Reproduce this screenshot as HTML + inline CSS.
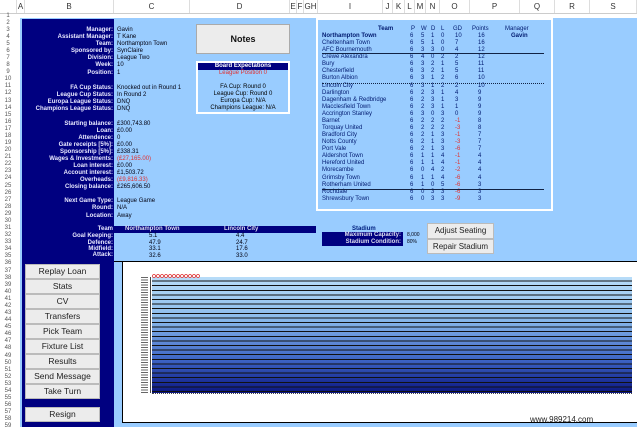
<!DOCTYPE html><html><head><meta charset="utf-8"><style>
*{margin:0;padding:0;box-sizing:border-box}
body{width:637px;height:427px;overflow:hidden;background:#fff;font-family:"Liberation Sans",sans-serif;position:relative}
.a{position:absolute;white-space:nowrap}
.hd{position:absolute;top:0;height:13px;font-size:8px;color:#333;text-align:center;line-height:13px;border-right:1px solid #ddd;background:#fff}
.rn{position:absolute;left:0;width:16px;font-size:6px;color:#555;text-align:center;line-height:7px;height:7px}
.l{position:absolute;right:524px;font-size:6px;font-weight:bold;color:#e8e8ff;line-height:7px}
.v{position:absolute;left:117px;font-size:6px;color:#001;line-height:7px}
.btn{position:absolute;left:25px;width:75px;height:15px;background:#ececec;border:1px solid #bbb;font-size:8.5px;color:#222;text-align:center;line-height:13px}
.t{position:absolute;font-size:6px;line-height:7px;color:#001a70}
.r{color:#e03030}
</style></head><body>
<div class="hd" style="left:0;width:17px"></div>
<div class="hd" style="left:17px;width:8px">A</div>
<div class="hd" style="left:25px;width:89px">B</div>
<div class="hd" style="left:114px;width:76px">C</div>
<div class="hd" style="left:190px;width:100px">D</div>
<div class="hd" style="left:290px;width:7px">E</div>
<div class="hd" style="left:297px;width:7px">F</div>
<div class="hd" style="left:304px;width:14px">GH</div>
<div class="hd" style="left:318px;width:65px">I</div>
<div class="hd" style="left:383px;width:10px">J</div>
<div class="hd" style="left:393px;width:12px">K</div>
<div class="hd" style="left:405px;width:10px">L</div>
<div class="hd" style="left:415px;width:11px">M</div>
<div class="hd" style="left:426px;width:14px">N</div>
<div class="hd" style="left:440px;width:30px">O</div>
<div class="hd" style="left:470px;width:50px">P</div>
<div class="hd" style="left:520px;width:35px">Q</div>
<div class="hd" style="left:555px;width:35px">R</div>
<div class="hd" style="left:590px;width:47px">S</div>
<div class="a" style="left:0;top:13px;width:637px;height:1px;background:#ccc"></div>
<div class="a" style="left:20px;top:18px;width:617px;height:409px;background:#99ccff"></div>
<div class="a" style="left:22px;top:19px;width:92px;height:408px;background:#000080"></div>
<div class="rn" style="top:13px">1</div><div class="rn" style="top:20px">2</div><div class="rn" style="top:27px">3</div><div class="rn" style="top:34px">4</div><div class="rn" style="top:41px">5</div><div class="rn" style="top:48px">6</div><div class="rn" style="top:55px">7</div><div class="rn" style="top:62px">8</div><div class="rn" style="top:69px">9</div><div class="rn" style="top:76px">10</div><div class="rn" style="top:83px">11</div><div class="rn" style="top:90px">12</div><div class="rn" style="top:98px">13</div><div class="rn" style="top:105px">14</div><div class="rn" style="top:112px">15</div><div class="rn" style="top:119px">16</div><div class="rn" style="top:126px">17</div><div class="rn" style="top:133px">18</div><div class="rn" style="top:140px">19</div><div class="rn" style="top:147px">20</div><div class="rn" style="top:154px">21</div><div class="rn" style="top:161px">22</div><div class="rn" style="top:168px">23</div><div class="rn" style="top:175px">24</div><div class="rn" style="top:183px">25</div><div class="rn" style="top:190px">26</div><div class="rn" style="top:197px">27</div><div class="rn" style="top:204px">28</div><div class="rn" style="top:211px">29</div><div class="rn" style="top:218px">30</div><div class="rn" style="top:225px">31</div><div class="rn" style="top:232px">32</div><div class="rn" style="top:239px">33</div><div class="rn" style="top:246px">34</div><div class="rn" style="top:253px">35</div><div class="rn" style="top:260px">36</div><div class="rn" style="top:268px">37</div><div class="rn" style="top:275px">38</div><div class="rn" style="top:282px">39</div><div class="rn" style="top:289px">40</div><div class="rn" style="top:296px">41</div><div class="rn" style="top:303px">42</div><div class="rn" style="top:310px">43</div><div class="rn" style="top:317px">44</div><div class="rn" style="top:324px">45</div><div class="rn" style="top:331px">46</div><div class="rn" style="top:338px">47</div><div class="rn" style="top:345px">48</div><div class="rn" style="top:353px">49</div><div class="rn" style="top:360px">50</div><div class="rn" style="top:367px">51</div><div class="rn" style="top:374px">52</div><div class="rn" style="top:381px">53</div><div class="rn" style="top:388px">54</div><div class="rn" style="top:395px">55</div><div class="rn" style="top:402px">56</div><div class="rn" style="top:409px">57</div><div class="rn" style="top:416px">58</div><div class="rn" style="top:423px">59</div>
<div class="l" style="top:27px">Manager:</div><div class="v" style="top:27px">Gavin</div>
<div class="l" style="top:34px">Assistant Manager:</div><div class="v" style="top:34px">T Kane</div>
<div class="l" style="top:41px">Team:</div><div class="v" style="top:41px">Northampton Town</div>
<div class="l" style="top:48px">Sponsored by:</div><div class="v" style="top:48px">SynClaire</div>
<div class="l" style="top:55px">Division:</div><div class="v" style="top:55px">League Two</div>
<div class="l" style="top:62px">Week:</div><div class="v" style="top:62px">10</div>
<div class="l" style="top:70px">Position:</div><div class="v" style="top:70px">1</div>
<div class="l" style="top:85px">FA Cup Status:</div><div class="v" style="top:85px">Knocked out in Round 1</div>
<div class="l" style="top:92px">League Cup Status:</div><div class="v" style="top:92px">In Round 2</div>
<div class="l" style="top:99px">Europa League Status:</div><div class="v" style="top:99px">DNQ</div>
<div class="l" style="top:106px">Champions League Status:</div><div class="v" style="top:106px">DNQ</div>
<div class="l" style="top:121px">Starting balance:</div><div class="v" style="top:121px">£300,743.80</div>
<div class="l" style="top:128px">Loan:</div><div class="v" style="top:128px">£0.00</div>
<div class="l" style="top:135px">Attendence:</div><div class="v" style="top:135px">0</div>
<div class="l" style="top:142px">Gate receipts [5%]:</div><div class="v" style="top:142px">£0.00</div>
<div class="l" style="top:149px">Sponsorship [5%]:</div><div class="v" style="top:149px">£338.31</div>
<div class="l" style="top:156px">Wages &amp; Investments:</div><div class="v r" style="top:156px">(£27,165.00)</div>
<div class="l" style="top:163px">Loan interest:</div><div class="v" style="top:163px">£0.00</div>
<div class="l" style="top:170px">Account interest:</div><div class="v" style="top:170px">£1,503.72</div>
<div class="l" style="top:177px">Overheads:</div><div class="v r" style="top:177px">(£9,816.33)</div>
<div class="l" style="top:184px">Closing balance:</div><div class="v" style="top:184px">£265,606.50</div>
<div class="l" style="top:198px">Next Game Type:</div><div class="v" style="top:198px">League Game</div>
<div class="l" style="top:205px">Round:</div><div class="v" style="top:205px">N/A</div>
<div class="l" style="top:213px">Location:</div><div class="v" style="top:213px">Away</div>
<div class="a" style="left:196px;top:24px;width:94px;height:30px;background:#ececec;border:1px solid #aaa;font-size:9px;font-weight:bold;text-align:center;line-height:28px;color:#111">Notes</div>
<div class="a" style="left:196px;top:61px;width:94px;height:53px;border:2px solid #fff;background:#99ccff;font-size:6px;text-align:center;line-height:7px;color:#000">
<div style="background:#000080;color:#fff;font-weight:bold">Board Expectations</div>
<div style="color:#e03030">League Position 0</div><div>&nbsp;</div>
<div>FA Cup: Round 0</div><div>League Cup: Round 0</div><div>Europa Cup: N/A</div><div>Champions League: N/A</div></div>
<div class="a" style="left:316px;top:18px;width:237px;height:193px;border:2px solid #fff;background:#99ccff"></div>
<div class="t" style="left:378px;top:26px;font-weight:bold">Team</div>
<div class="t" style="left:411px;top:26px">P</div><div class="t" style="left:421px;top:26px">W</div><div class="t" style="left:431px;top:26px">D</div><div class="t" style="left:441px;top:26px">L</div><div class="t" style="left:453px;top:26px">GD</div><div class="t" style="left:472px;top:26px">Points</div><div class="t" style="left:505px;top:26px">Manager</div>
<div class="a" style="left:322px;top:33px;font-size:6px;line-height:7.08px;color:#001a70;font-weight:bold">Northampton Town<br><span style="font-weight:normal">Cheltenham Town<br>AFC Bournemouth<br>Crewe Alexandra<br>Bury<br>Chesterfield<br>Burton Albion<br>Lincoln City<br>Darlington<br>Dagenham &amp; Redbridge<br>Macclesfield Town<br>Accrington Stanley<br>Barnet<br>Torquay United<br>Bradford City<br>Notts County<br>Port Vale<br>Aldershot Town<br>Hereford United<br>Morecambe<br>Grimsby Town<br>Rotherham United<br>Rochdale<br>Shrewsbury Town</span></div>
<div class="t" style="left:410px;top:33px;line-height:7.08px">6<br>6<br>6<br>6<br>6<br>6<br>6<br>6<br>6<br>6<br>6<br>6<br>6<br>6<br>6<br>6<br>6<br>6<br>6<br>6<br>6<br>6<br>6<br>6</div>
<div class="t" style="left:421px;top:33px;line-height:7.08px">5<br>5<br>3<br>4<br>3<br>3<br>3<br>3<br>2<br>2<br>2<br>3<br>2<br>2<br>2<br>2<br>2<br>1<br>1<br>0<br>1<br>1<br>0<br>0</div>
<div class="t" style="left:431px;top:33px;line-height:7.08px">1<br>1<br>3<br>0<br>2<br>2<br>1<br>1<br>3<br>3<br>3<br>0<br>2<br>2<br>1<br>1<br>1<br>1<br>1<br>4<br>1<br>0<br>3<br>3</div>
<div class="t" style="left:441px;top:33px;line-height:7.08px">0<br>0<br>0<br>2<br>1<br>1<br>2<br>2<br>1<br>1<br>1<br>3<br>2<br>2<br>3<br>3<br>3<br>4<br>4<br>2<br>4<br>5<br>3<br>3</div>
<div class="t" style="left:455px;top:33px;line-height:7.08px">10<br>7<br>4<br>2<br>5<br>5<br>6<br>2<br>4<br>3<br>1<br>0<br><span class="r">-1<br>-3<br>-1<br>-3<br>-6<br>-1<br>-1<br>-2<br>-6<br>-6<br>-6<br>-9</span></div>
<div class="t" style="left:478px;top:33px;line-height:7.08px">16<br>16<br>12<br>12<br>11<br>11<br>10<br>10<br>9<br>9<br>9<br>9<br>8<br>8<br>7<br>7<br>7<br>4<br>4<br>4<br>4<br>3<br>3<br>3</div>
<div class="t" style="left:511px;top:33px;font-weight:bold">Gavin</div>
<div class="a" style="left:322px;top:53px;width:222px;height:1px;background:#124"></div>
<div class="a" style="left:322px;top:83px;width:222px;height:0;border-top:1px dotted #124"></div>
<div class="a" style="left:322px;top:189px;width:222px;height:1px;background:#124"></div>
<div class="a" style="left:114px;top:226px;width:202px;height:7px;background:#000080"></div>
<div class="l" style="top:226px">Team</div>
<div class="a" style="left:125px;top:226px;font-size:6px;font-weight:bold;color:#dde;line-height:7px">Northampton Town</div>
<div class="a" style="left:224px;top:226px;font-size:6px;font-weight:bold;color:#dde;line-height:7px">Lincoln City</div>
<div class="l" style="top:233px">Goal Keeping:</div><div class="l" style="top:240px">Defence:</div><div class="l" style="top:246px">Midfield:</div><div class="l" style="top:252px">Attack:</div>
<div class="a" style="left:149px;top:233px;font-size:6px;line-height:6.5px;color:#001">5.1<br>47.9<br>33.1<br>32.6</div>
<div class="a" style="left:236px;top:233px;font-size:6px;line-height:6.5px;color:#001">4.4<br>24.7<br>17.6<br>33.0</div>
<div class="a" style="left:352px;top:226px;font-size:6px;font-weight:bold;color:#002080;line-height:7px">Stadium</div>
<div class="a" style="left:322px;top:232px;width:81px;height:14px;background:#000080;color:#dde;font-size:6px;font-weight:bold;text-align:right;padding-right:2px;line-height:6.5px">Maximum Capacity:<br>Stadium Condition:</div>
<div class="a" style="left:407px;top:232px;font-size:5px;line-height:6.5px;color:#001">8,000<br>80%</div>
<div class="a" style="left:427px;top:223px;width:67px;height:16px;background:#ececec;border:1px solid #bbb;font-size:8px;text-align:center;line-height:14px;color:#222">Adjust Seating</div>
<div class="a" style="left:427px;top:239px;width:67px;height:15px;background:#ececec;border:1px solid #bbb;font-size:8px;text-align:center;line-height:13px;color:#222">Repair Stadium</div>
<div class="a" style="left:114px;top:261px;width:523px;height:1px;background:#000"></div>
<div class="a" style="left:122px;top:262px;width:515px;height:161px;background:#fff;border-left:1px solid #000"></div>
<div class="a" style="left:122px;top:422px;width:515px;height:1px;background:#000"></div>
<div class="a" style="left:152px;top:277px;width:480px;height:116px;background:repeating-linear-gradient(to bottom,transparent 0,transparent 3.6px,#111 3.6px,#111 4.6px),linear-gradient(to bottom,#b8dcf8,#8cbcec 35%,#4068c8 70%,#0a1580)"></div>
<div class="a" style="left:152px;top:393px;width:480px;height:0;border-top:1px dotted #444"></div>
<div class="a" style="left:150px;top:277px;width:1px;height:116px;background:#444"></div>
<div class="a" style="left:152px;top:274px;width:48px;height:4px;background:radial-gradient(circle,transparent 1px,#e04040 1.2px,#e04040 1.8px,transparent 2px) 0 0/4px 4px repeat-x"></div>
<div class="a" style="left:141px;top:277px;width:7px;height:116px;background:repeating-linear-gradient(to bottom,#666 0,#666 1px,transparent 1px,transparent 2.5px)"></div>
<div class="a" style="left:530px;top:415px;font-size:8px;color:#222">www.989214.com</div>
<div class="btn" style="top:264px">Replay Loan</div>
<div class="btn" style="top:279px">Stats</div>
<div class="btn" style="top:294px">CV</div>
<div class="btn" style="top:309px">Transfers</div>
<div class="btn" style="top:324px">Pick Team</div>
<div class="btn" style="top:339px">Fixture List</div>
<div class="btn" style="top:354px">Results</div>
<div class="btn" style="top:369px">Send Message</div>
<div class="btn" style="top:384px">Take Turn</div>
<div class="btn" style="top:407px">Resign</div>
</body></html>
